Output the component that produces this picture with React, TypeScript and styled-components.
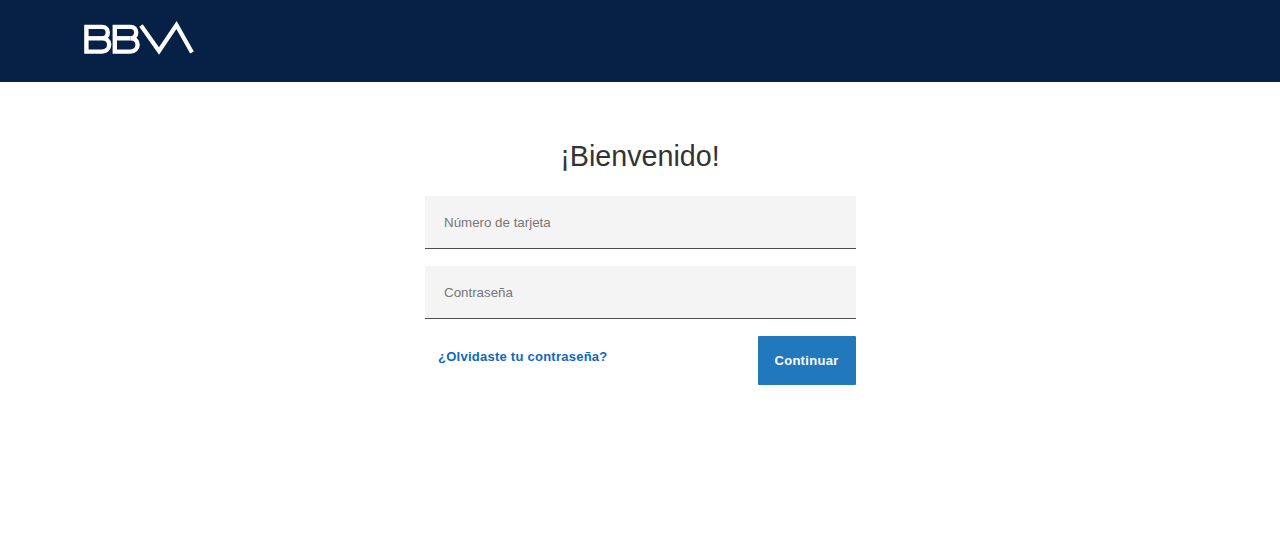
import React from "react";
import styled, { createGlobalStyle } from "styled-components";

const GlobalStyle = createGlobalStyle`
  html, body {
    margin: 0;
    padding: 0;
    background: #fff;
    font-family: "Liberation Sans", Arial, sans-serif;
  }
`;

const Page = styled.div`
  width: 1280px;
  height: 551px;
  overflow: hidden;
`;

const Header = styled.header`
  height: 82px;
  background: #072146;
  padding: 21px 0 0 84px;
  box-sizing: border-box;
`;

const LogoSvg = styled.svg`
  display: block;
  width: 110px;
  height: 34px;
`;

const Main = styled.main`
  width: 431px;
  margin: 0 auto;
  padding-top: 57px;
`;

const Title = styled.h1`
  margin: 0 0 23px;
  height: 34px;
  font-size: 28.7px;
  line-height: 35px;
  font-weight: 400;
  color: #333;
  text-align: center;
`;

const Field = styled.div`
  height: 53px;
  margin-bottom: 17px;
  padding-left: 19.5px;
  display: flex;
  align-items: center;
  box-sizing: border-box;
  background: #f4f4f4;
  border-bottom: 1px solid #4f4f4f;
`;

const FieldInput = styled.input`
  width: 100%;
  border: 0;
  outline: 0;
  padding: 0;
  background: transparent;
  font-family: inherit;
  font-size: 13.33px;
  color: #333;

  &::placeholder {
    color: #777;
    opacity: 1;
  }
`;

const Actions = styled.div`
  display: flex;
  justify-content: space-between;
  align-items: flex-start;
`;

const ForgotLink = styled.a`
  margin: 12px 0 0 13.5px;
  font-size: 13px;
  line-height: 17px;
  font-weight: 700;
  letter-spacing: 0.25px;
  color: #0f66c4;
  text-decoration: none;
`;

const SubmitButton = styled.button`
  width: 98px;
  height: 49px;
  border: 0;
  border-radius: 1px;
  padding: 0;
  background: #2178bd;
  color: #fff;
  font-family: inherit;
  font-size: 13px;
  font-weight: 700;
  letter-spacing: 0.3px;
`;

const LogoB = ({ x }: { x: number }) => (
  <g transform={`translate(${x} 0)`}>
    <path d="M2.4 5.9H18C21.8 5.9 23.8 8.4 23.8 11.4C23.8 14.6 21.6 17.3 18 17.3C22.6 17.3 25.2 20 25.2 23.6C25.2 27.4 22.4 30.6 18 30.6H2.4Z" />
    <path d="M2.4 17.3H18" />
  </g>
);

const BbvaLogo = () => (
  <LogoSvg viewBox="0 0 110 34" fill="none" stroke="#fff" strokeWidth="4.4">
    <LogoB x={0} />
    <LogoB x={28.4} />
    <path d="M57 4.5L75 30L92.5 4L108 31.5" strokeMiterlimit="8" strokeWidth="4.2" />
  </LogoSvg>
);

export default function App() {
  return (
    <Page>
      <GlobalStyle />
      <Header>
        <BbvaLogo />
      </Header>
      <Main>
        <Title>¡Bienvenido!</Title>
        <Field>
          <FieldInput placeholder="Número de tarjeta" />
        </Field>
        <Field>
          <FieldInput placeholder="Contraseña" />
        </Field>
        <Actions>
          <ForgotLink href="#">¿Olvidaste tu contraseña?</ForgotLink>
          <SubmitButton>Continuar</SubmitButton>
        </Actions>
      </Main>
    </Page>
  );
}
